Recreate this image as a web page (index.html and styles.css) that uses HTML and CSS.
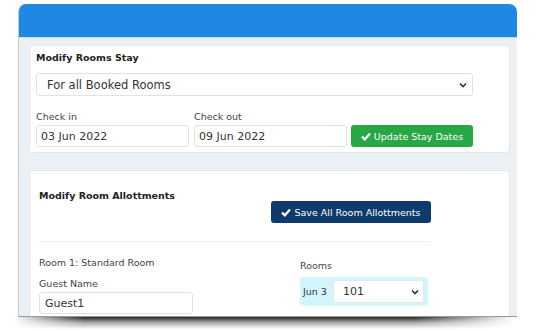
FILE: index.html
```html
<!DOCTYPE html>
<html>
<head>
  <title>Modify Rooms</title>
  <link rel="stylesheet" href="styles.css">
</head>
<body>
<div class="window">
  <div class="header"></div>
  <div class="content">
    <div class="card stay">
      <div class="card-title">Modify Rooms Stay</div>
      <div class="select wide">
        <span>For all Booked Rooms</span>
        <svg class="caret" width="8" height="6" viewBox="0 0 8 6"><path d="M1 1.5 L4 4.5 L7 1.5" fill="none" stroke="#333" stroke-width="1.6"/></svg>
      </div>
      <div class="dates">
        <div class="field">
          <label>Check in</label>
          <div class="input">03 Jun 2022</div>
        </div>
        <div class="field">
          <label>Check out</label>
          <div class="input">09 Jun 2022</div>
        </div>
        <button class="btn btn-green">
          <svg width="10" height="9" viewBox="0 0 10 9"><path d="M1 4.6 L3.8 7.3 L9 1.6" fill="none" stroke="#fff" stroke-width="2.2"/></svg>
          Update Stay Dates
        </button>
      </div>
    </div>

    <div class="card allot">
      <div class="allot-head">
        <div class="card-title">Modify Room Allottments</div>
        <button class="btn btn-navy">
          <svg width="10" height="9" viewBox="0 0 10 9"><path d="M1 4.6 L3.8 7.3 L9 1.6" fill="none" stroke="#fff" stroke-width="2.2"/></svg>
          Save All Room Allottments
        </button>
      </div>
      <div class="divider"></div>
      <div class="room-row">
        <div class="guest-col">
          <div class="room-name">Room 1: Standard Room</div>
          <label>Guest Name</label>
          <div class="input guest">Guest1</div>
        </div>
        <div class="rooms-col">
          <label>Rooms</label>
          <div class="night">
            <span class="night-date">Jun 3</span>
            <div class="select small">
              <span>101</span>
              <svg class="caret" width="8" height="6" viewBox="0 0 8 6"><path d="M1 1.5 L4 4.5 L7 1.5" fill="none" stroke="#333" stroke-width="1.6"/></svg>
            </div>
          </div>
        </div>
      </div>
    </div>
  </div>
</div>
<div class="drop-shadow"></div>
</body>
</html>
```

FILE: styles.css
```css
body {
    margin: 0;
    width: 540px;
    height: 331px;
    overflow: hidden;
    background: #fff;
    font-family: "DejaVu Sans", Verdana, sans-serif;
    color: #333;
}

.window {
    margin: 4px 0 0 18px;
    width: 499px;
    height: 313px;
    background: #ebf0f4;
    border-radius: 8px 8px 0 0;
    border-left: 1px solid #c8c8c8;
    border-bottom: 1px solid #9a9a9a;
    overflow: hidden;
    box-sizing: border-box;
}

.header {
    height: 33px;
    background: #1e88e2;
    border-bottom: 1px solid #d0dbe6;
}

.content {
    padding: 8px 8px 0 11px;
}

.card {
    background: #fff;
    border-radius: 3px;
    box-shadow: 0 0 2px rgba(0, 0, 0, 0.12);
}

.card-title {
    font-size: 9.5px;
    font-weight: bold;
    color: #222;
}

.stay {
    height: 106px;
    padding: 6px 36px 0 6px;
    box-sizing: border-box;
}

.select {
    display: flex;
    align-items: center;
    justify-content: space-between;
    border: 1px solid #e2e2e2;
    border-radius: 3px;
    background: #fff;
    box-sizing: border-box;
}

.select.wide {
    margin-top: 10px;
    height: 23px;
    padding: 0 5px 0 10px;
    font-size: 11.5px;
    color: #333;
}

.dates {
    display: flex;
    align-items: flex-end;
    margin-top: 15px;
}

.field {
    width: 153px;
    margin-right: 5px;
}

label {
    display: block;
    font-size: 9.5px;
    color: #444;
    margin-bottom: 3px;
}

.input {
    height: 22px;
    border: 1px solid #e2e2e2;
    border-radius: 3px;
    padding: 0 4px;
    display: flex;
    align-items: center;
    font-size: 11px;
    color: #333;
    box-sizing: border-box;
}

.btn {
    display: flex;
    align-items: center;
    justify-content: center;
    gap: 3px;
    border: none;
    border-radius: 3px;
    color: #fff;
    font-family: "DejaVu Sans", Verdana, sans-serif;
    font-size: 9.5px;
    padding: 0;
    box-sizing: border-box;
}

.btn-green {
    width: 122px;
    height: 22px;
    margin-left: -1px;
    background: #28a745;
}

.btn-navy {
    width: 160px;
    height: 22px;
    background: #0e3a6c;
    margin-top: 11px;
}

.allot {
    margin-top: 19px;
    height: 160px;
    padding: 0 78px 0 9px;
}

.allot-head {
    display: flex;
    justify-content: space-between;
    padding-top: 19px;
}

.divider {
    height: 1px;
    background: #eeeeee;
    margin-top: 18px;
}

.room-row {
    display: flex;
}

.guest-col {
    width: 154px;
    padding-top: 15px;
}

.room-name {
    font-size: 9.5px;
    color: #444;
    margin-bottom: 10px;
}

.guest {
    font-size: 11px;
    padding: 0 5px;
}

.rooms-col {
    margin-left: 107px;
    padding-top: 18px;
}

.rooms-col label {
    margin-bottom: 6px;
}

.night {
    display: flex;
    align-items: center;
    width: 128px;
    height: 29px;
    background: #d3f6fd;
    border-radius: 3px;
    padding: 0 4px 0 3px;
    box-sizing: border-box;
}

.night-date {
    font-size: 9.5px;
    color: #333;
    width: 30px;
}

.select.small {
    flex: 1;
    height: 23px;
    padding: 0 4px 0 9px;
    font-size: 11px;
    border-color: #e6e6e6;
}

.drop-shadow {
    margin: 0 0 0 14px;
    width: 500px;
    height: 12px;
    background: linear-gradient(to bottom, rgba(25, 25, 25, 0.95), rgba(90, 90, 90, 0.55) 45%, rgba(255, 255, 255, 0));
    -webkit-mask-image: linear-gradient(to right, transparent, #000 14%, #000 80%, transparent);
    mask-image: linear-gradient(to right, transparent, #000 14%, #000 80%, transparent);
}
```
